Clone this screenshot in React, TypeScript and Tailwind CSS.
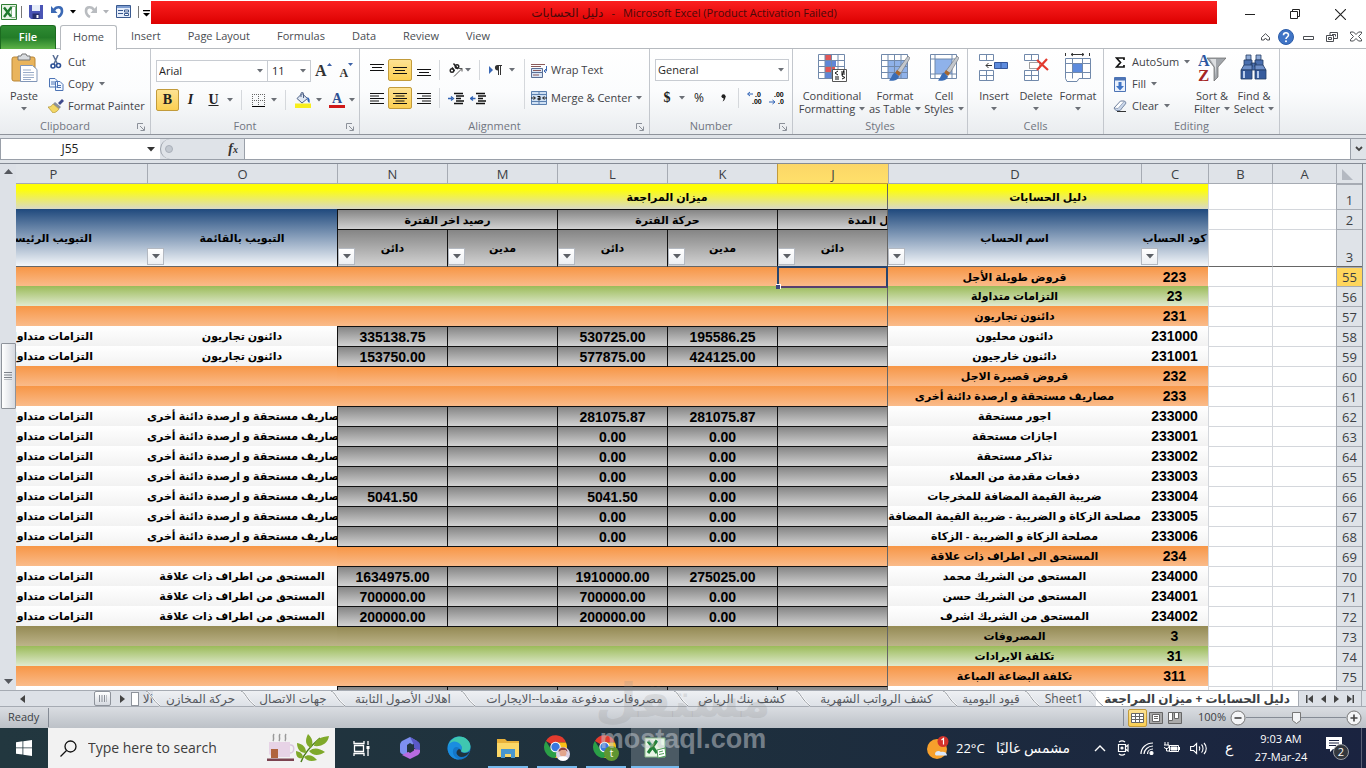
import { ReactNode } from "react";
import clsx from "clsx";

type Kind = "orange" | "green" | "khaki" | "item";

type Row = {
  n: number;
  kind: Kind;
  code: string;
  name: string;
  k?: string;
  l?: string;
  m?: string;
  nn?: string;
  o?: string;
};

const TRADE = "دائنون تجاريون";
const ACCRUED = "مصاريف مستحقة و ارصدة دائنة أخرى";
const RELATED = "المستحق من اطراف ذات علاقة";

const rows: Row[] = [
  { n: 55, kind: "orange", code: "223", name: "قروض طويلة الأجل" },
  { n: 56, kind: "green", code: "23", name: "التزامات متداولة" },
  { n: 57, kind: "orange", code: "231", name: "دائنون تجاريون" },
  { n: 58, kind: "item", code: "231000", name: "دائنون محليون", k: "195586.25", l: "530725.00", nn: "335138.75", o: TRADE },
  { n: 59, kind: "item", code: "231001", name: "دائنون خارجيون", k: "424125.00", l: "577875.00", nn: "153750.00", o: TRADE },
  { n: 60, kind: "orange", code: "232", name: "قروض قصيرة الاجل" },
  { n: 61, kind: "orange", code: "233", name: "مصاريف مستحقة و ارصدة دائنة أخرى" },
  { n: 62, kind: "item", code: "233000", name: "اجور مستحقة", k: "281075.87", l: "281075.87", o: ACCRUED },
  { n: 63, kind: "item", code: "233001", name: "اجازات مستحقة", k: "0.00", l: "0.00", o: ACCRUED },
  { n: 64, kind: "item", code: "233002", name: "تذاكر مستحقة", k: "0.00", l: "0.00", o: ACCRUED },
  { n: 65, kind: "item", code: "233003", name: "دفعات مقدمة من العملاء", k: "0.00", l: "0.00", o: ACCRUED },
  { n: 66, kind: "item", code: "233004", name: "ضريبة القيمة المضافة للمخرجات", k: "0.00", l: "5041.50", nn: "5041.50", o: ACCRUED },
  { n: 67, kind: "item", code: "233005", name: "مصلحة الزكاة و الضريبة - ضريبة القيمة المضافة", k: "0.00", l: "0.00", o: ACCRUED },
  { n: 68, kind: "item", code: "233006", name: "مصلحة الزكاة و الضريبة - الزكاة", k: "0.00", l: "0.00", o: ACCRUED },
  { n: 69, kind: "orange", code: "234", name: "المستحق الى اطراف ذات علاقة" },
  { n: 70, kind: "item", code: "234000", name: "المستحق من الشريك محمد", k: "275025.00", l: "1910000.00", nn: "1634975.00", o: RELATED },
  { n: 71, kind: "item", code: "234001", name: "المستحق من الشريك حسن", k: "0.00", l: "700000.00", nn: "700000.00", o: RELATED },
  { n: 72, kind: "item", code: "234002", name: "المستحق من الشريك اشرف", k: "0.00", l: "200000.00", nn: "200000.00", o: RELATED },
  { n: 73, kind: "khaki", code: "3", name: "المصروفات" },
  { n: 74, kind: "green", code: "31", name: "تكلفة الايرادات" },
  { n: 75, kind: "orange", code: "311", name: "تكلفة البضاعة المباعة" },
  { n: 76, kind: "item", code: "", name: "" },
];

const fills: Record<Kind, string> = {
  orange: "bg-linear-to-b/srgb from-[#f79646] to-[#fabb8a]",
  green: "bg-linear-to-b/srgb from-[#9bbb59] to-[#e0ead0]",
  khaki: "bg-linear-to-b/srgb from-[#948a54] to-[#bdb48a]",
  item: "bg-linear-to-b/srgb from-white to-[#f2f2f2]",
};

const GRAY = "bg-linear-to-b/srgb from-[#858585] to-[#d2d2d2]";
const BLUE = "bg-linear-to-b/srgb from-[#1f497d] to-[#f4f7fa]";
const YELLOW = "bg-linear-to-b/srgb from-[#ffff05] from-20% to-[#d9d9c6]";

const Arrow = ({ className = "text-[#6b6f76]" }: { className?: string }) => (
  <svg viewBox="0 0 6 4" className={clsx("w-[6px] h-1 shrink-0", className)}>
    <path d="M0 0h6L3 3.6z" fill="currentColor" />
  </svg>
);

const Sep = ({ className }: { className?: string }) => (
  <span className={clsx("w-px shrink-0", className || "h-5 bg-[#d5d8dc]")} />
);

const Launcher = () => (
  <button aria-label="More options" className="absolute right-[5px] bottom-[3px]">
    <svg viewBox="0 0 8 8" className="w-2 h-2" fill="none" stroke="#8b9099">
      <path d="M.5 6V.5H6M3 3l4 4M7.500 3.500V7.500H3.500" />
    </svg>
  </button>
);

type GroupProps = { label: string; className: string; children: ReactNode; launcher?: boolean };

const Group = ({ label, className, children, launcher }: GroupProps) => (
  <section className={clsx("relative flex flex-col shrink-0 border-r border-[#c3c7cd] h-full", className)}>
    <div className="h-[69px]">{children}</div>
    <div className="text-center text-[11px] leading-4 text-[#70757f]">{label}</div>
    {launcher && <Launcher />}
  </section>
);

const BigButton = ({ icon, lines, className }: { icon: ReactNode; lines: string[]; className: string }) => (
  <button className={clsx("flex flex-col items-center shrink-0 whitespace-nowrap text-[11px] leading-[13px]", className)}>
    <span className="h-[34px] pt-1">{icon}</span>
    <span className="pt-[6px]">{lines[0]}</span>
    <span className="h-[13px] flex items-center gap-1">
      {lines[1]}
      <Arrow />
    </span>
  </button>
);

const SmallButton = ({ icon, label, arrow }: { icon: ReactNode; label: string; arrow?: boolean }) => (
  <button className="flex items-center h-[22px] gap-1 text-[11px] whitespace-nowrap">
    <span className="w-4 flex justify-center">{icon}</span>
    {label}
    {arrow && <Arrow className="ml-px text-[#6b6f76]" />}
  </button>
);

const Lines = ({ d }: { d: string }) => (
  <svg viewBox="0 0 14 13" className="w-[14px] h-[13px]" stroke="#111" fill="none">
    <path d={d} />
  </svg>
);

const ExcelIcon = () => (
  <svg viewBox="0 0 16 16" className="w-4 h-4">
    <path d="M.5.500h15v15H.5z" fill="#e8f3e6" stroke="#2f7d32" />
    <path d="M10.500 2.500h4v11h-4z" fill="#fff" stroke="#5d9c5f" strokeWidth=".7" />
    <path d="m3 3.500 7 9M10.500 3l-7.500 10" stroke="#1f7a2e" strokeWidth="2.400" />
  </svg>
);

const GridIcon = ({ children }: { children?: ReactNode }) => (
  <svg viewBox="0 0 30 30" className="w-[30px] h-[30px]">
    <path d="M1.500 1.500h26v24h-26z" fill="#fff" stroke="#7189ab" />
    {children}
  </svg>
);

const Brush = () => (
  <>
    <path d="m28 3 2 2-9 15-4-2z" fill="#c3c7cc" stroke="#6b6f76" strokeWidth=".6" />
    <path d="m17 17 4 3-2 3-4-3z" fill="#a8672e" />
    <path d="M15 19.500c-3 1-3 5-6 8 4 1 9 0 10-4z" fill="#3a6cb5" />
  </>
);

const TitleBar = () => (
  <header className="flex h-6 shrink-0 bg-white">
    <div className="flex items-center w-[151px] shrink-0 pl-px pb-px">
      <ExcelIcon />
      <Sep className="h-3 ml-1 bg-[#777]" />
      <button aria-label="Save" className="ml-[7px]">
        <svg viewBox="0 0 14 14" className="w-[14px] h-[14px]">
          <path d="M0 0h14v14H2l-2-2z" fill="#4a55b5" />
          <path d="M3 0h8v6H3z" fill="#e6edf8" />
          <path d="M3.500 8.500h7V14h-7z" fill="#26306e" />
          <path d="M7.500 10h2v3h-2z" fill="#fff" />
        </svg>
      </button>
      <button aria-label="Undo" className="ml-2 flex items-center gap-[6px]">
        <svg viewBox="0 0 13 13" className="w-[13px] h-[13px]" fill="none">
          <path d="M3 5C5 1.500 11 1 11 6c0 3-2 5-4 6" stroke="#3b69b5" strokeWidth="2.600" />
          <path d="M0 1v7h6.500z" fill="#3b69b5" />
        </svg>
        <Arrow className="text-black" />
      </button>
      <button aria-label="Redo" className="ml-2 flex items-center gap-[6px]">
        <svg viewBox="0 0 13 13" className="w-[13px] h-[13px]" fill="none">
          <path d="M10 5C8 1.500 2 1 2 6c0 3 2 5 4 6" stroke="#b9bcc0" strokeWidth="2.600" />
          <path d="M13 1v7H6.500z" fill="#b9bcc0" />
        </svg>
        <Arrow className="text-[#b0b3b8]" />
      </button>
      <button aria-label="Form" className="ml-[7px]">
        <svg viewBox="0 0 15 13" className="w-[15px] h-[13px]">
          <path d="M.5.5h14v12H.5z" fill="#e6eefb" stroke="#39598f" />
          <path d="M1 1h13v2H1z" fill="#7d9cd0" />
          <path d="M2 5.500h5M2 8.500h5" stroke="#39598f" />
          <path d="M8.500 5h4v2h-4zM8.500 8.500h4v2h-4z" fill="#fff" stroke="#39598f" />
        </svg>
      </button>
      <Sep className="h-3 ml-[7px] bg-[#777]" />
      <button aria-label="Customize" className="ml-1 pt-1">
        <svg viewBox="0 0 7 7" className="w-[7px] h-[7px]">
          <path d="M0 0h7v1.200H0zM0 3h7L3.500 6.500z" />
        </svg>
      </button>
    </div>
    <h1 className="flex-1 mt-px bg-linear-to-b/srgb from-[#fb2020] to-[#dc0000] text-center text-[11px] leading-6 text-[#4a0a0a] font-medium">
      <span dir="rtl" className="text-xs">دليل الحسابات</span>
      <span className="mx-2">-</span>
      <span>Microsoft Excel (Product Activation Failed)</span>
    </h1>
    <div className="flex items-center w-[149px] shrink-0 pt-1 pl-7 gap-[35px] text-[#222]">
      <button aria-label="Minimize">
        <svg viewBox="0 0 10 10" className="w-[10px] h-[10px]" stroke="currentColor"><path d="M0 5.500h10" /></svg>
      </button>
      <button aria-label="Restore">
        <svg viewBox="0 0 10 10" className="w-[10px] h-[10px]" stroke="currentColor" fill="none">
          <path d="M.5 2.500h7v7h-7zM2.500 2.500v-2h7v7h-2" />
        </svg>
      </button>
      <button aria-label="Close">
        <svg viewBox="0 0 10 10" className="w-[11px] h-[11px]" stroke="currentColor"><path d="m0 0 10 10M10 0 0 10" /></svg>
      </button>
    </div>
  </header>
);

const TabBar = () => (
  <nav className="flex h-[25px] shrink-0 bg-white text-[11px] text-[#4a4d52] border-b border-[#b6babf] pt-px">
    <button className="w-14 h-6 rounded-t-[3px] border border-b-0 border-[#1c6b20] bg-linear-to-b/srgb from-[#2f8c33] via-[#237c28] to-[#5db348] text-white font-semibold">
      File
    </button>
    <button className="ml-1 w-[57px] h-[25px] pb-[2px] -mb-px rounded-t-[3px] border border-b-0 border-[#b6babf] bg-white z-10">Home</button>
    <div className="flex items-center pl-[14px] gap-[27px]">
      <button>Insert</button>
      <button>Page Layout</button>
      <button>Formulas</button>
      <button>Data</button>
      <button>Review</button>
      <button>View</button>
    </div>
    <div className="ml-auto flex items-center pr-1 gap-2 text-[#4a4d52]">
      <button aria-label="Collapse ribbon">
        <svg viewBox="0 0 9 8" className="w-[9px] h-2" fill="none" stroke="currentColor">
          <path d="M.5 4.500 4.500.7l4 3.800v2.500h-2.500L4.500 5 3 7H.5z" />
        </svg>
      </button>
      <button aria-label="Help">
        <svg viewBox="0 0 16 16" className="w-4 h-4">
          <circle cx="8" cy="8" r="7.500" fill="#3f74c6" stroke="#2d5da8" />
          <path d="M5.500 6.200c0-3.200 5-3.200 5-.2 0 2-2.500 2-2.500 4" fill="none" stroke="#fff" strokeWidth="1.600" />
          <circle cx="8" cy="12.300" r="1" fill="#fff" />
        </svg>
      </button>
      <button aria-label="Minimize workbook">
        <svg viewBox="0 0 12 12" className="w-3 h-3" fill="none" stroke="currentColor"><path d="M1.500 5.500h10v3h-10z" /></svg>
      </button>
      <button aria-label="Restore workbook" className="ml-1">
        <svg viewBox="0 0 12 12" className="w-3 h-3" fill="none" stroke="currentColor">
          <path d="M.5 4.500h7v6h-7zM2.500 6.500h3v2h-3zM4 4.500v-3h7.500v6h-4M6 3.500h3.500v2" />
        </svg>
      </button>
      <button aria-label="Close workbook" className="ml-1">
        <svg viewBox="0 0 12 11" className="w-3 h-[11px]" fill="none" stroke="currentColor">
          <path d="M.5 1h3L6 3.500 8.500 1h3v1.500L8.500 5.500l3 3V10h-3L6 7.500 3.500 10h-3V8.500l3-3-3-3z" />
        </svg>
      </button>
    </div>
  </nav>
);

const ON = "bg-linear-to-b/srgb from-[#fde293] to-[#fbcf52] border border-[#c29b3b] rounded-[2px]";

const Ribbon = () => (
  <div className="flex h-[86px] shrink-0 bg-linear-to-b/srgb from-white via-[#fbfcfd] to-[#e9ecef] border-b border-[#8e939b] text-[#3f4247]">
    <Group label="Clipboard" className="w-[151px] pr-5" launcher>
      <div className="flex">
        <BigButton
          className="w-12"
          lines={["Paste", ""]}
          icon={
            <svg viewBox="0 0 28 30" className="w-7 h-[30px]">
              <rect x="2" y="4" width="23" height="24" rx="2" fill="#e9b45c" stroke="#b98636" />
              <path d="M8 3h3l1-2h4l1 2h3v4H8z" fill="#d9dce0" stroke="#777" />
              <path d="M10.500 12.500h12l4.500 4v12H10.500z" fill="#fff" stroke="#8196b8" />
              <path d="M13 17h8M13 19.500h11M13 22h11M13 24.500h11M13 26.500h8" stroke="#9aacc8" />
            </svg>
          }
        />
        <div className="pt-[2px]">
          <SmallButton
            label="Cut"
            icon={
              <svg viewBox="0 0 12 14" className="w-3 h-[14px]" fill="none">
                <path d="M3 0 7.500 9M8 0 4 9" stroke="#5a6f95" strokeWidth="1.500" />
                <circle cx="3" cy="11" r="2" stroke="#2b4f95" strokeWidth="1.600" />
                <circle cx="8.500" cy="10.500" r="2" stroke="#2b4f95" strokeWidth="1.600" />
              </svg>
            }
          />
          <SmallButton
            label="Copy"
            arrow
            icon={
              <svg viewBox="0 0 15 13" className="w-[15px] h-[13px]" fill="#f2f7ff" stroke="#4d74b5">
                <path d="M.5.500H6L8.500 3v6h-8zM6.500 3.500H11l3 3v6H6.500z" />
                <path d="M2 4h4M2 6h4M8 7.500h4M8 9.500h4" />
              </svg>
            }
          />
          <SmallButton
            label="Format Painter"
            icon={
              <svg viewBox="0 0 16 14" className="w-4 h-[14px]">
                <path d="m10 4 4-4 2 2-4 4z" fill="#3f4a8c" />
                <path d="m7 3 6 5-2 2-6-5z" fill="#8b919b" />
                <path d="m5 5 6 5c-2 3-5 4-6 4L0 8c2 0 4-1 5-3z" fill="#f3d766" stroke="#a88a2a" strokeWidth=".6" />
              </svg>
            }
          />
        </div>
      </div>
    </Group>

    <Group label="Font" className="w-[209px] pr-5" launcher>
      <div className="w-[208px] flex items-center pl-[5px] pt-[10px]">
        <label className="flex items-center w-28 h-[22px] border border-[#c8ccd2] bg-white">
          <select aria-label="Font name" defaultValue="Arial" className="appearance-none flex-1 pl-[2px] text-[11px] text-[#1f1f1f]">
            <option>Arial</option>
          </select>
          <Arrow className="mr-1 text-[#6b6f76]" />
        </label>
        <label className="flex items-center w-[43px] h-[22px] border border-l-0 border-[#c8ccd2] bg-white">
          <select aria-label="Font size" defaultValue="11" className="appearance-none flex-1 w-5 pl-1 text-[11px] text-[#1f1f1f]">
            <option>11</option>
          </select>
          <Arrow className="mr-1 text-[#6b6f76]" />
        </label>
        <button className="ml-1 flex items-start font-['Liberation_Serif',serif] font-bold text-base leading-5 text-[#333]">
          A
          <svg viewBox="0 0 5 3" className="w-[5px] h-[3px] mt-[2px]"><path d="M0 3h5L2.500 0z" fill="#3c62a8" /></svg>
        </button>
        <button className="ml-2 flex items-start font-['Liberation_Serif',serif] font-bold text-xs leading-5 pt-1 text-[#333]">
          A
          <svg viewBox="0 0 5 3" className="w-[5px] h-[3px]"><path d="M0 0h5L2.500 3z" fill="#3c62a8" /></svg>
        </button>
      </div>
      <div className="w-[208px] flex items-center pl-[5px] pt-[6px] font-['Liberation_Serif',serif] text-sm text-[#222]">
        <button className={clsx("w-[23px] h-[22px] leading-5 font-bold", ON)}>B</button>
        <button className="w-[23px] italic font-bold">I</button>
        <button className="w-[23px] underline font-bold">U</button>
        <Arrow className="ml-[2px] text-[#6b6f76]" />
        <Sep className="h-5 bg-[#d5d8dc] ml-2" />
        <button aria-label="Borders" className="ml-[10px]">
          <svg viewBox="0 0 13 13" className="w-[13px] h-[13px]" fill="none">
            <path d="M.5 0v12M6.500 0v12M12.500 0v12M0 .500h13M0 6.500h13" stroke="#666" strokeDasharray="1 1" />
            <path d="M0 12.500h13" stroke="#000" />
          </svg>
        </button>
        <Arrow className="ml-[6px] text-[#6b6f76]" />
        <Sep className="h-5 bg-[#d5d8dc] ml-2" />
        <button aria-label="Fill color" className="ml-[9px]">
          <svg viewBox="0 0 16 16" className="w-4 h-4">
            <path d="M0 11.500h16V16H0z" fill="#f8ee1c" />
            <path d="m7 1.500 5.500 5L7 11 2 6.500z" fill="#dfe7f3" stroke="#4b5f85" />
            <path d="M6 5V1.500c0-1.500 2.500-1.500 2.500 0V6" fill="none" stroke="#4b5f85" />
            <path d="M12.500 5c2 1 2.500 3 2 6-1.500-1-2.500-2-2-6z" fill="#2f62b5" />
          </svg>
        </button>
        <Arrow className="ml-[5px] text-[#6b6f76]" />
        <button aria-label="Font color" className="ml-[7px] flex flex-col items-center w-4 leading-[13px] font-bold text-[#2c4f93]">
          A
          <span className="w-4 h-[3px] bg-[#d01818]" />
        </button>
        <Arrow className="ml-1 text-[#6b6f76]" />
      </div>
    </Group>

    <Group label="Alignment" className="w-[290px] pr-5" launcher>
      <div className="flex pl-[5px] pt-[10px]">
        <div className="w-[159px] shrink-0">
          <div className="flex items-center h-[22px]">
            <button aria-label="Top align" className="w-[23px] flex justify-center pb-1"><Lines d="M0 2.500h14M2 5.500h10M0 8.500h14" /></button>
            <button aria-label="Middle align" className={clsx("w-6 h-[22px] flex justify-center items-center", ON)}><Lines d="M0 3.500h14M2 6.500h10M0 9.500h14" /></button>
            <button aria-label="Bottom align" className="w-[23px] flex justify-center pt-1"><Lines d="M0 3.500h14M2 6.500h10M0 9.500h14" /></button>
            <Sep className="h-5 bg-[#d5d8dc] ml-1" />
            <button aria-label="Orientation" className="ml-2 flex items-center">
              <svg viewBox="0 0 16 16" className="w-4 h-4" fill="none" stroke="#222">
                <circle cx="4" cy="8.500" r="1.800" strokeWidth="1.400" />
                <path d="M4 5.500 6.500 9M5.500 1.500 10 7" strokeWidth="1.400" />
                <circle cx="9" cy="4.500" r="1.800" strokeWidth="1.400" />
                <path d="m6 14.500 8-8m0 0h-3m3 0v3" stroke="#555" />
              </svg>
              <Arrow className="ml-px text-[#6b6f76]" />
            </button>
            <Sep className="h-5 bg-[#d5d8dc] ml-2" />
            <button aria-label="Text direction" className="ml-[9px] flex items-center">
              <svg viewBox="0 0 13 10" className="w-[13px] h-[10px]">
                <path d="m0 1 4 4-4 4z" fill="#3b69b5" />
                <path d="M8.500 0H13v1h-1v9h-1V1h-1v9H9V5.500C5 5.500 5 0 8.500 0z" fill="#333" />
              </svg>
              <Arrow className="ml-[7px] text-[#6b6f76]" />
            </button>
          </div>
          <div className="flex items-center h-[22px] mt-[6px]">
            <button aria-label="Align left" className="w-[23px] flex justify-center"><Lines d="M0 1.500h14M0 4h9M0 6.500h14M0 9h9M0 11.500h14" /></button>
            <button aria-label="Center" className={clsx("w-6 h-[22px] flex justify-center items-center", ON)}><Lines d="M0 1.500h14M2.500 4h9M0 6.500h14M2.500 9h9M0 11.500h14" /></button>
            <button aria-label="Align right" className="w-[23px] flex justify-center"><Lines d="M0 1.500h14M5 4h9M0 6.500h14M5 9h9M0 11.500h14" /></button>
            <Sep className="h-5 bg-[#d5d8dc] ml-1" />
            <button aria-label="Decrease indent" className="ml-2">
              <svg viewBox="0 0 16 13" className="w-4 h-[13px]" stroke="#111" fill="none">
                <path d="M6 1.500h9M8 4h8M8 6.500h5M8 9h8M6 11.500h9" strokeWidth="1.300" />
                <path d="M0 6.500h4M3 4.500l2.500 2L3 8.500" stroke="#2f62b5" strokeWidth="1.300" />
              </svg>
            </button>
            <button aria-label="Increase indent" className="ml-[6px]">
              <svg viewBox="0 0 16 13" className="w-4 h-[13px]" stroke="#111" fill="none">
                <path d="M6 1.500h9M8 4h8M8 6.500h5M8 9h8M6 11.500h9" strokeWidth="1.300" />
                <path d="M5.500 6.500h-4M3 4.500.500 6.500 3 8.500" stroke="#2f62b5" strokeWidth="1.300" />
              </svg>
            </button>
          </div>
        </div>
        <div className="border-l border-[#d5d8dc] pl-[6px] text-[11px]">
          <button className="flex items-center h-[22px] gap-1 whitespace-nowrap">
            <svg viewBox="0 0 16 15" className="w-4 h-[15px]" fill="none">
              <path d="M0 1.500h14M0 3.500h10" stroke="#8a5a5a" />
              <path d="M.5 5.500h11v4H.5zM.5 9.500h11v5H.5z" fill="#dbe6f5" stroke="#5a6f95" />
              <path d="M2 7.500h8M2 12h6" stroke="#8a5a5a" />
              <path d="M15.500 3v5h-2M15 6l-2 2 2 2" stroke="#3b69b5" />
            </svg>
            Wrap Text
          </button>
          <button className="flex items-center h-[22px] mt-[6px] gap-1 whitespace-nowrap">
            <svg viewBox="0 0 16 14" className="w-4 h-[14px]" fill="none">
              <path d="M.5.500h15v13H.5zM.5 3.500h15M.5 10.500h15M8 0v3M8 11v3" fill="#cfe0f3" stroke="#5a7fae" />
              <path d="M0 7h4M12 7h4M2.500 5.500 4.500 7l-2 1.500M13.500 5.500l-2 1.500 2 1.500" stroke="#222" />
              <path d="M6.500 5.500h2.500V9M9 7.200H7v1.600h2" stroke="#111" />
            </svg>
            Merge &amp; Center
            <Arrow />
          </button>
        </div>
      </div>
    </Group>

    <Group label="Number" className="w-[143px] pr-5" launcher>
      <div className="w-[140px] pl-[5px] pt-[10px]">
        <label className="flex items-center h-[22px] w-[134px] border border-[#c8ccd2] bg-white">
          <select aria-label="Number format" defaultValue="General" className="appearance-none flex-1 pl-[2px] text-[11px] text-[#1f1f1f]">
            <option>General</option>
          </select>
          <Arrow className="mr-1 text-[#6b6f76]" />
        </label>
        <div className="flex items-center h-[22px] mt-[6px] text-[#222]">
          <button className="w-6 font-['Liberation_Serif',serif] font-bold text-sm">$</button>
          <Arrow className="text-[#6b6f76]" />
          <button className="w-7 text-xs font-medium">%</button>
          <button aria-label="Comma style" className="w-5 flex justify-center">
            <svg viewBox="0 0 5 8" className="w-[5px] h-2"><circle cx="2.500" cy="2.200" r="2" fill="#222" /><path d="M4.500 2c0 3-1 4.500-3 5.500 1-1.500 1.200-2.500 1-4z" fill="#222" /></svg>
          </button>
          <Sep className="h-5 bg-[#d5d8dc] ml-[5px]" />
          <button aria-label="Increase decimal" className="ml-[7px]">
            <svg viewBox="0 0 17 14" className="w-[17px] h-[14px]" fontSize="7" fontFamily="Liberation Sans" fontWeight="bold">
              <text x="9" y="6">.0</text>
              <text x="6" y="13">.00</text>
              <path d="M7 3H2m2-2L1.500 3 4 5" stroke="#2f62b5" fill="none" />
            </svg>
          </button>
          <button aria-label="Decrease decimal" className="ml-[6px]">
            <svg viewBox="0 0 17 14" className="w-[17px] h-[14px]" fontSize="7" fontFamily="Liberation Sans" fontWeight="bold">
              <text x="5" y="6">.00</text>
              <text x="9" y="13">.0</text>
              <path d="M0 11h5M3.500 9 6 11l-2.500 2" stroke="#2f62b5" fill="none" />
            </svg>
          </button>
        </div>
      </div>
    </Group>

    <Group label="Styles" className="w-[175px]">
      <div className="flex pl-[7px]">
        <BigButton
          className="w-16"
          lines={["Conditional", "Formatting"]}
          icon={
            <GridIcon>
              <path d="M8 2h6v6H8zM8 14h10v6H8z" fill="#e05656" />
              <path d="M8 8h11v6H8zM8 20h6v5H8z" fill="#5f86d8" />
              <path d="M8 1.500v24M14.500 1.500v24M21 1.500v24M1.500 7.500h26M1.500 13.500h26M1.500 19.500h26" stroke="#7189ab" fill="none" />
              <path d="M15.500 16.500h14v12h-14z" fill="#fff" stroke="#555" />
              <path d="m21 18-3 2 3 2M18 24h4M18 26h4M24 19h4M24 21h4M27 17l-2 6M25 23l3 1.500-3 1.500" stroke="#111" fill="none" />
            </GridIcon>
          }
        />
        <BigButton
          className="w-[62px]"
          lines={["Format", "as Table"]}
          icon={
            <GridIcon>
              <path d="M8 8h19v17H8z" fill="#8fb2ea" />
              <path d="M8 1.500v24M14.500 1.500v24M21 1.500v24M1.500 7.500h26M1.500 13.500h26M1.500 19.500h26" stroke="#7189ab" fill="none" />
              <Brush />
            </GridIcon>
          }
        />
        <BigButton
          className="w-9"
          lines={["Cell", "Styles"]}
          icon={
            <GridIcon>
              <path d="M6 6h17v15H6z" fill="#8fb2ea" />
              <path d="M6 1.500v24M23 1.500v24M1.500 6h26M1.500 21h26" stroke="#7189ab" fill="none" />
              <Brush />
            </GridIcon>
          }
        />
      </div>
    </Group>

    <Group label="Cells" className="w-[136px]">
      <div className="flex pl-[5px]">
        <BigButton
          className="w-[42px]"
          lines={["Insert", ""]}
          icon={
            <svg viewBox="0 0 30 30" className="w-[30px] h-[30px]" fill="#fff" stroke="#7189ab">
              <path d="M.5 1.500h14v6H.5zM7.500 1.500v6M.5 17.500h14v10H.5zM7.500 17.500v10M.5 22.500h14" />
              <path d="M15.500 9.500h13v6h-13zM22 9.500v6" fill="#5d8bdd" stroke="#34569a" />
              <path d="M13 12.500H7m2.500-2.500L7 12.500 9.500 15" stroke="#333" fill="none" />
            </svg>
          }
        />
        <BigButton
          className="w-[42px]"
          lines={["Delete", ""]}
          icon={
            <svg viewBox="0 0 30 30" className="w-[30px] h-[30px]" fill="#fff" stroke="#7189ab">
              <path d="M3.500 1.500h14v6h-14zM10.500 1.500v6M3.500 17.500h14v10h-14zM10.500 17.500v10M3.500 22.500h14" />
              <path d="M8.500 9.500h10v6h-10z" strokeDasharray="1 1" stroke="#444" />
              <path d="m16 7 11 10M26 6 16 17" stroke="#e23a2e" strokeWidth="2.200" />
            </svg>
          }
        />
        <BigButton
          className="w-[42px]"
          lines={["Format", ""]}
          icon={
            <svg viewBox="0 0 30 30" className="w-[30px] h-[30px]" fill="#fff" stroke="#7189ab">
              <path d="M2.500 5.500h25v20H16l-2 3H4l-1.500-3z" />
              <path d="M10 10.500h9v9h-9z" fill="#5d8bdd" stroke="none" />
              <path d="M9.500 5.500v20M19.500 5.500v20M2.500 10.500h25M2.500 19.500h25" fill="none" />
              <path d="M2.500 0v3M26.500 0v3" stroke="#333" />
              <path d="M8 1.500h13M10 0 8 1.500 10 3M19 0l2 1.500L19 3" stroke="#333" fill="none" />
            </svg>
          }
        />
      </div>
    </Group>

    <Group label="Editing" className="w-44">
      <div className="flex pl-2">
        <div className="w-[79px] pt-[2px] shrink-0">
          <SmallButton
            label="AutoSum"
            arrow
            icon={
              <svg viewBox="0 0 10 11" className="w-[10px] h-[11px]" fill="none" stroke="#111" strokeWidth="1.700">
                <path d="M9 3V1H1.500L5.500 5.500l-4 4.500H9V8" />
              </svg>
            }
          />
          <SmallButton
            label="Fill"
            arrow
            icon={
              <svg viewBox="0 0 12 15" className="w-3 h-[15px]">
                <path d="M.5.500h11v14H.5z" fill="#eaf1fc" stroke="#4d74b5" />
                <path d="M1 1h10v2.500H1z" fill="#4d74b5" />
                <path d="M4.500 5h3v4H10l-4 4.500L2 9h2.500z" fill="#3f74c6" />
              </svg>
            }
          />
          <SmallButton
            label="Clear"
            arrow
            icon={
              <svg viewBox="0 0 14 12" className="w-[14px] h-3">
                <path d="m1 8 6.500-7h4l1.500 2-6 7.500H3z" fill="#fff" stroke="#6f7f9c" />
                <path d="m1 8 4 .5L11.500 1 13 3l-6 7.500H3z" fill="#c9d6ea" stroke="#6f7f9c" strokeWidth=".6" />
                <path d="M4 11.500h9" stroke="#333" />
              </svg>
            }
          />
        </div>
        <BigButton
          className="w-[42px]"
          lines={["Sort &", "Filter"]}
          icon={
            <svg viewBox="0 0 28 30" className="w-7 h-[30px]" fontFamily="Liberation Serif" fontWeight="bold">
              <text x="0" y="13" fontSize="16" fill="#2c57a0">A</text>
              <text x="0" y="28" fontSize="17" fill="#a52525">Z</text>
              <path d="M9 5h19l-8 9v10l-4 4V14z" fill="#a2a6ab" stroke="#666" strokeWidth=".7" />
              <path d="M12 6h6v8l-1 10v-10z" fill="#dcdee0" />
            </svg>
          }
        />
        <BigButton
          className="w-[42px]"
          lines={["Find &", "Select"]}
          icon={
            <svg viewBox="0 0 28 28" className="w-7 h-7" stroke="#243c66" strokeWidth=".8">
              <path d="M6 2h5v5H6zM16 2h5v5h-5z" fill="#8faad6" />
              <path d="M4 7h8v7H4zM15 7h8v7h-8zM11 10h5v7h-5z" fill="#4a6fae" />
              <path d="M1 17l3-5h8v5zM15 17v-5h8l3 5z" fill="#6f90c8" />
              <path d="M1 17h11v9H1zM15 17h11v9H15z" fill="#365b9c" />
              <path d="M4 18v7M18 18v7" stroke="#b8cbea" strokeWidth="2" />
            </svg>
          }
        />
      </div>
    </Group>
  </div>
);

const FormulaBar = () => (
  <div className="shrink-0 bg-[#dfe3e8] pt-[3px] pb-[3px] border-b border-[#858b95]">
    <div className="flex h-[22px] border-y border-[#9aa0a9] bg-[#dfe3e8]">
      <div className="flex items-center w-40 bg-white border-l border-[#9aa0a9]">
        <input aria-label="Name box" defaultValue="J55" className="w-[138px] text-center text-xs text-[#222]" />
        <svg viewBox="0 0 8 5" className="w-2 h-[5px] ml-2"><path d="M0 0h8L4 4.500z" fill="#333" /></svg>
      </div>
      <div className="flex items-center justify-between w-[85px] rounded-l-full border-l border-r border-[#9aa0a9] pl-1 pr-[6px]">
        <span className="w-2 h-2 rounded-full bg-[#c2c8d0] border border-[#aab0b9]" />
        <span className="font-['Liberation_Serif',serif] italic font-bold text-sm leading-5 text-[#333]">
          f<span className="text-[10px]">x</span>
        </span>
      </div>
      <input aria-label="Formula" className="flex-1 min-w-0 bg-white" />
      <button aria-label="Expand formula bar" className="w-4 border-l border-[#9aa0a9] flex items-center justify-center">
        <svg viewBox="0 0 8 6" className="w-2 h-[6px]" fill="none" stroke="#444" strokeWidth="1.800"><path d="m1 1 3 3 3-3" /></svg>
      </button>
    </div>
  </div>
);

const Filter = () => (
  <button aria-label="Filter" className="absolute left-0 bottom-px w-[17px] h-[17px] bg-linear-to-b/srgb from-white to-[#eceff3] border border-[#b4b9c1] flex items-center justify-center">
    <svg viewBox="0 0 8 5" className="w-2 h-[5px]"><path d="M0 0h8L4 4.500z" fill="#5c6066" /></svg>
  </button>
);

const LINE = "border-[#111]";
const rowHead =
  "border-t border-l border-[#a6abb3] text-[#3c3f44] text-[13px] leading-[18px] font-normal align-bottom text-center font-['Open_Sans',sans-serif]";
const blank = "bg-white border-t border-l border-[#d4d7dc]";

const Sheet = () => (
  <table className="w-full table-fixed border-separate border-spacing-0 text-center text-[11px] leading-4 whitespace-nowrap text-black">
    <colgroup>
      <col />
      <col className="w-[190px]" />
      <col className="w-[110px]" />
      <col className="w-[110px]" />
      <col className="w-[110px]" />
      <col className="w-[110px]" />
      <col className="w-[111px]" />
      <col className="w-[253px]" />
      <col className="w-[67px]" />
      <col className="w-16" />
      <col className="w-16" />
      <col className="w-[26px]" />
    </colgroup>
    <thead>
      <tr className="h-5">
        {["P", "O", "N", "M", "L", "K", "J", "D", "C", "B", "A"].map((c) => (
          <th
            key={c}
            className={clsx(
              "p-0 font-normal text-[13px] text-[#3c3f44] border-b font-['Open_Sans',sans-serif]",
              c === "P" && "pr-[56px]",
              c !== "P" && "border-l",
              c === "J" ? "bg-linear-to-b/srgb from-[#fbd667] to-[#ffe06a] border-[#c29b3b]" : "bg-[#dfe3e8] border-[#a6abb3]"
            )}
          >
            {c}
          </th>
        ))}
        <th className="p-0 bg-[#dfe3e8] border-l border-b border-[#a6abb3]">
          <svg viewBox="0 0 12 12" className="w-3 h-3 ml-1"><path d="M1 1v11h11z" fill="#b4b9c1" /></svg>
        </th>
      </tr>
      <tr className="h-[25px] font-bold">
        <td colSpan={3} className={YELLOW} />
        <td colSpan={4} className={clsx("p-0 border-r border-[#666]", YELLOW)}>ميزان المراجعة</td>
        <td colSpan={2} className={clsx("p-0", YELLOW)}>دليل الحسابات</td>
        <td className="bg-white border-l border-[#d4d7dc]" />
        <td className="bg-white border-l border-[#d4d7dc]" />
        <th className={clsx("p-0 bg-[#dfe3e8]", rowHead)}>1</th>
      </tr>
      <tr className="h-5 font-bold">
        <td rowSpan={2} dir="rtl" className={clsx("p-0 pr-[55px] text-right overflow-hidden border-b border-[#666]", BLUE)}>التبويب الرئيسي</td>
        <td rowSpan={2} className={clsx("p-0 relative border-b border-[#666]", BLUE)}>
          التبويب بالقائمة
          <Filter />
        </td>
        <td colSpan={2} className={clsx("p-0 border-t border-l", LINE, GRAY)}>رصيد اخر الفترة</td>
        <td colSpan={2} className={clsx("p-0 border-t border-l", LINE, GRAY)}>حركة الفترة</td>
        <td className={clsx("p-0 pl-[70px] text-left overflow-hidden border-t border-l border-r border-r-[#666]", LINE, GRAY)}>
          ول المدة
        </td>
        <td rowSpan={2} className={clsx("p-0 relative border-b border-[#666]", BLUE)}>
          اسم الحساب
          <Filter />
        </td>
        <td rowSpan={2} className={clsx("p-0 relative border-b border-[#666]", BLUE)}>
          كود الحساب
          <Filter />
        </td>
        <td className={blank} />
        <td className={blank} />
        <th className={clsx("p-0 bg-[#dfe3e8]", rowHead)}>2</th>
      </tr>
      <tr className="h-[38px] font-bold">
        {["دائن", "مدين", "دائن", "مدين", "دائن"].map((t, i) => (
          <td
            key={i}
            className={clsx("p-0 relative border-t border-l border-b border-b-[#666]", LINE, GRAY, i === 4 && "border-r border-r-[#666]")}
          >
            {t}
            <Filter />
          </td>
        ))}
        <td className={clsx("border-b border-b-[#666]", blank)} />
        <td className={clsx("border-b border-b-[#666]", blank)} />
        <th className={clsx("p-0 bg-[#dfe3e8] border-b border-b-[#666]", rowHead)}>3</th>
      </tr>
    </thead>
    <tbody className="font-bold">
      {rows.map((r, i) => {
        const fill = fills[r.kind];
        const item = r.kind === "item";
        const lined = item || (i > 0 && rows[i - 1].kind === "item");
        const cell = clsx("p-0", item ? clsx("border-l", GRAY) : fill, lined && "border-t", LINE);
        const first = r.n === 55;
        return (
          <tr key={r.n} className={first ? "h-[19px]" : "h-5"}>
            <td dir="rtl" className={clsx("p-0 pr-[54px] text-right overflow-hidden", fill)}>{r.o && "التزامات متداولة"}</td>
            <td className={clsx("p-0 overflow-hidden", fill)}>{r.o}</td>
            <td className={clsx(cell, "text-sm leading-4")}>{r.nn}</td>
            <td className={clsx(cell, "text-sm leading-4")}>{r.m}</td>
            <td className={clsx(cell, "text-sm leading-4")}>{r.l}</td>
            <td className={clsx(cell, "text-sm leading-4")}>{r.k}</td>
            <td className={clsx(cell, "relative border-r border-r-[#666]")}>
              {first && (
                <div className="absolute left-0 -top-px -right-px -bottom-[2px] z-10 border-2 border-[#26456f] border-b-[#57406f]">
                  <span className="absolute -left-[3px] -bottom-[3px] w-[5px] h-[5px] bg-[#3f4a80] border-t border-r border-white" />
                </div>
              )}
            </td>
            <td className={clsx("p-0", fill)}>{r.name}</td>
            <td className={clsx("p-0 text-sm leading-4", fill)}>{r.code}</td>
            <td className={first ? "bg-white" : blank} />
            <td className={first ? "bg-white border-l border-[#d4d7dc]" : blank} />
            <th className={clsx("p-0", rowHead, first ? "bg-[#ffd65c]" : "bg-[#dfe3e8]")}>{r.n < 76 && r.n}</th>
          </tr>
        );
      })}
    </tbody>
  </table>
);

const VScroll = () => (
  <div className="w-4 shrink-0 bg-[#dde1e7] flex flex-col items-center pt-[5px] pb-[6px]">
    <svg viewBox="0 0 9 5" className="w-[9px] h-[5px]"><path d="M0 5h9L4.500 0z" fill="#55585e" /></svg>
    <div className="mt-[169px] w-[15px] h-[66px] border border-[#8e939b] rounded-[1px] bg-linear-to-r/srgb from-white to-[#d5d9e0] flex items-center justify-center">
      <svg viewBox="0 0 8 8" className="w-2 h-2" stroke="#7d828a"><path d="M0 .500h8M0 3h8M0 5.500h8M0 8h8" /></svg>
    </div>
    <svg viewBox="0 0 9 5" className="w-[9px] h-[5px] mt-auto"><path d="M0 0h9L4.500 5z" fill="#55585e" /></svg>
  </div>
);

const sheets = [
  { name: "Sheet1", w: "w-16" },
  { name: "قيود اليومية", w: "w-[82px]" },
  { name: "كشف الرواتب الشهرية", w: "w-[147px]" },
  { name: "كشف بنك الرياض", w: "w-[122px]" },
  { name: "مصروفات مدفوعة مقدما--الايجارات", w: "w-[213px]" },
  { name: "اهلاك الأصول الثابتة", w: "w-[130px]" },
  { name: "جهات الاتصال", w: "w-[90px]" },
  { name: "حركة المخازن", w: "w-[95px]" },
];

const Slash = () => (
  <svg viewBox="0 0 14 16" className="absolute -left-[7px] top-0 z-10 w-[14px] h-4" fill="none">
    <path d="M0 0c4 1 6 9 14 15" stroke="#fff" strokeWidth="2" />
    <path d="M0 0c4 1 6 9 14 15" stroke="#8e939b" />
  </svg>
);

const SheetTabs = () => (
  <div dir="rtl" className="flex h-[17px] shrink-0 bg-[#dde1e7] border-y border-[#a6abb3] text-xs leading-[15px] text-[#55585e] pr-1 whitespace-nowrap">
    <div dir="ltr" className="w-16 flex items-center justify-between px-[7px] border-x border-[#a6abb3]">
      <button aria-label="First sheet"><svg viewBox="0 0 7 8" className="w-[7px] h-2"><path d="M0 0h1.500v8H0zM7 0v8L2 4z" fill="#444" /></svg></button>
      <button aria-label="Previous sheet"><svg viewBox="0 0 5 8" className="w-[5px] h-2"><path d="M5 0v8L0 4z" fill="#444" /></svg></button>
      <button aria-label="Next sheet"><svg viewBox="0 0 5 8" className="w-[5px] h-2"><path d="M0 0v8l5-4z" fill="#444" /></svg></button>
      <button aria-label="Last sheet"><svg viewBox="0 0 7 8" className="w-[7px] h-2"><path d="M7 0H5.500v8H7zM0 0v8l5-4z" fill="#444" /></svg></button>
    </div>
    <button className="relative w-[202px] bg-white font-bold text-[#3c3f44]">
      دليل الحسابات + ميزان المراجعة
      <Slash />
    </button>
    {sheets.map((s) => (
      <button key={s.name} className={clsx("relative shrink-0 bg-linear-to-b/srgb from-[#eef0f3] to-[#dde1e7]", s.w)}>
        {s.name}
        <Slash />
      </button>
    ))}
    <span className="w-[14px] overflow-hidden">الا</span>
    <div dir="ltr" className="flex-1 flex items-center pl-5 min-w-0">
      <svg viewBox="0 0 5 8" className="w-[5px] h-2"><path d="M5 0v8L0 4z" fill="#444" /></svg>
      <div className="ml-auto w-[17px] h-[15px] border border-[#8e939b] rounded-[2px] bg-linear-to-b/srgb from-white to-[#d5d9e0] flex items-center justify-center">
        <svg viewBox="0 0 8 7" className="w-2 h-[7px]" stroke="#8a8f97"><path d="M.5 0v7M3 0v7M5.500 0v7M8 0v7" /></svg>
      </div>
      <svg viewBox="0 0 5 8" className="w-[5px] h-2 ml-[9px] mr-[6px]"><path d="M0 0v8l5-4z" fill="#444" /></svg>
      <span className="w-2 h-[14px] border border-[#8e939b] bg-white" />
    </div>
  </div>
);

const StatusBar = () => (
  <footer className="flex items-center h-[21px] shrink-0 bg-linear-to-b/srgb from-[#dadde2] to-[#bcc1c7] text-[11px] text-[#3c3f44]">
    <span className="w-12 pl-2">Ready</span>
    <Sep className="h-[19px] bg-[#858b95]" />
    <Sep className="ml-auto h-[17px] bg-[#858b95]" />
    <button aria-label="Normal view" className={clsx("ml-1 w-[19px] h-[18px] flex items-center justify-center", ON)}>
      <svg viewBox="0 0 13 10" className="w-[13px] h-[10px]" fill="#fff" stroke="#666"><path d="M.5.500h12v9H.5zM4.500 0v10M8.500 0v10M0 3.500h13M0 6.500h13" /></svg>
    </button>
    <button aria-label="Page layout view" className="ml-[2px]">
      <svg viewBox="0 0 14 12" className="w-[14px] h-3" fill="#aaa" stroke="#666"><path d="M.5.500h13v11H.5z" /><path d="M3.500 2.500h7v7h-7zM5 4.500h4M5 6.500h4" fill="#fff" /></svg>
    </button>
    <button aria-label="Page break view" className="ml-[5px]">
      <svg viewBox="0 0 14 12" className="w-[14px] h-3" fill="#fff" stroke="#666"><path d="M.5.500h13v11H.5z" fill="#aaa" /><path d="M.5.500h4v8h-4zM6.500.500h4v6h-4z" /></svg>
    </button>
    <span className="ml-3 w-8 text-right">100%</span>
    <button aria-label="Zoom out" className="ml-1">
      <svg viewBox="0 0 16 16" className="w-4 h-4"><circle cx="8" cy="8" r="7" fill="#f4f5f7" stroke="#777" /><path d="M4.500 8h7" stroke="#444" strokeWidth="1.600" /></svg>
    </button>
    <div className="w-[100px] h-3 flex items-center justify-center relative">
      <span className="absolute left-0 right-0 h-px bg-[#858b95]" />
      <svg viewBox="0 0 9 12" className="w-[9px] h-3 relative"><path d="M.5.500h8v8l-4 3-4-3z" fill="#f4f5f7" stroke="#777" /></svg>
    </div>
    <button aria-label="Zoom in" className="mr-1">
      <svg viewBox="0 0 16 16" className="w-4 h-4"><circle cx="8" cy="8" r="7" fill="#f4f5f7" stroke="#777" /><path d="M4.500 8h7M8 4.500v7" stroke="#444" strokeWidth="1.600" /></svg>
    </button>
  </footer>
);

const TaskApp = ({ label, children, open, active }: { label: string; children: ReactNode; open?: boolean; active?: boolean }) => (
  <button aria-label={label} className={clsx("relative w-12 mr-px h-full flex items-center justify-center", active && "bg-[#4b5a64]")}>
    {children}
    {open && <span className={clsx("absolute bottom-0 h-[2px] bg-[#76b9ed]", active ? "left-0 right-0" : "left-1 right-1")} />}
  </button>
);

const Chrome = ({ children }: { children: ReactNode }) => (
  <svg viewBox="0 0 26 26" className="w-[26px] h-[26px]">
    <path d="M11.500 11.500 1.900 6A11 11 0 0 1 22 7.500h-10z" fill="#e33b2e" />
    <path d="M22 7.500A11 11 0 0 1 11 23l5-9-4-6.500z" fill="#fbc116" />
    <path d="M1.900 6A11 11 0 0 0 11 23l4.500-8h-8z" fill="#2b9f47" />
    <circle cx="11.500" cy="12" r="5.200" fill="#fff" />
    <circle cx="11.500" cy="12" r="4.200" fill="#3878e0" />
    {children}
  </svg>
);

const Taskbar = () => (
  <div className="flex h-10 shrink-0 bg-linear-to-r/srgb from-[#22373f] via-[#1e303d] to-[#1a2340] text-white">
    <button aria-label="Start" className="w-12 flex items-center justify-center">
      <svg viewBox="0 0 16 16" className="w-4 h-4" fill="#fff"><path d="M0 2.200 6.500 1.300v6.200H0zM7.300 1.200 16 0v7.500H7.300zM0 8.300h6.500v6.300L0 13.700zM7.300 8.300H16V16l-8.700-1.200z" /></svg>
    </button>
    <label className="flex items-center w-[287px] bg-[#f2f2f2] pl-3">
      <svg viewBox="0 0 17 17" className="w-[17px] h-[17px]" fill="none" stroke="#111" strokeWidth="1.300"><circle cx="10.500" cy="6.500" r="5.500" /><path d="M6.500 10.500.500 16.500" /></svg>
      <input aria-label="Search" placeholder="Type here to search" className="ml-[11px] w-[178px] text-sm placeholder:text-[#3d3d3d]" />
      <svg viewBox="0 0 64 32" className="w-16 h-8">
        <path d="M8 2c-2 3 1 4-1 7M14 2c-2 3 1 4-1 7M20 2c-2 3 1 4-1 7" stroke="#999" fill="none" strokeWidth="1.500" />
        <path d="M3 10h21v15H6l-3-3z" fill="#e7d3e6" />
        <path d="M24 13c5-1 5 8 0 8" stroke="#d9c6de" strokeWidth="1.500" fill="none" />
        <path d="M5 17h7v9H5z" fill="#b0643e" />
        <path d="M1 26.500h27v2.500H1z" fill="#7b4350" />
        <path d="M35 30c3-9 12-18 19-24" stroke="#4d7d1b" strokeWidth="1.500" fill="none" />
        <path d="M45 16c-6-3-6-8-3-14 4 4 6 8 3 14zM48 14c1-7 7-9 15-10-1 7-7 11-15 10zM40 21c-6 0-9-4-9-10 6 1 9 4 9 10zM43 19c5-4 10-3 16 1-6 4-12 4-16-1zM38 25c4-3 9-2 13 3-6 2-10 1-13-3zM37 26c-5 1-7-1-7-7 5 1 7 3 7 7z" fill="#7fa92a" />
      </svg>
    </label>
    <div className="flex pl-[2px]">
      <TaskApp label="Task view">
        <svg viewBox="0 0 17 17" className="w-[17px] h-[17px]" fill="none" stroke="#fff" strokeWidth="1.300"><path d="M1 1v2.500h10V1M1.500 5.500h9v6h-9zM1 16v-2.500h10V16M15 1v4M15 9v7" /><path d="M13.500 6h3v3h-3z" fill="#fff" stroke="none" /></svg>
      </TaskApp>
      <TaskApp label="Microsoft 365">
        <svg viewBox="0 0 22 22" className="w-[22px] h-[22px]">
          <path d="m11 0 7 4-5 4-5 3v7l3 3-8-4c-2-1-2-2-2-4V8c0-2 1-3 2-4z" fill="#7e8ff0" />
          <path d="m11 0 7 4c2 1 3 2 3 4v7l-6-4V8z" fill="#5a58c8" />
          <path d="M21 13v2c0 1-1 2-2 3l-8 4-8-4 12-6z" fill="#b86be0" />
          <path d="m8 8 3-2 4 2.500v5L11 16l-3-2z" fill="#22343f" />
        </svg>
      </TaskApp>
      <TaskApp label="Edge">
        <svg viewBox="0 0 24 24" className="w-6 h-6">
          <circle cx="12" cy="12" r="11.500" fill="#1476c8" />
          <path d="M1 11C2 4 8 .5 12 .5c7 0 11.500 5 11.500 10 0 4-3 6-6 6-2.500 0-4-1-3-3 1-3-1-5.500-4.500-5.500C5 8 1 10 1 11z" fill="#3fc7b0" />
          <path d="M1 10C4 4 10 5 13 8c2 2 2 4 1 6-3-5-9-4-8 3 1 4 4 6 7 6.500C6 24-1 18 1 10z" fill="#1a8de0" />
          <path d="M14 14c-1 2 1 3 4 3 2 0 4-1 5-2-2 4-5 6-9 6-5-1-6-6-2-8z" fill="#20333e" />
        </svg>
      </TaskApp>
      <TaskApp label="File Explorer" open>
        <svg viewBox="0 0 22 19" className="w-[22px] h-[19px]"><path d="M0 0h8l2 2h12v16H0z" fill="#e8b13a" /><path d="M0 4h22v14H0z" fill="#fbd767" /><path d="M4 10h14v9h-4v-4H8v4H4z" fill="#4896cf" /></svg>
      </TaskApp>
      <TaskApp label="Chrome" open>
        <Chrome>
          <circle cx="19" cy="19" r="7" fill="#d9d0e4" />
          <circle cx="19" cy="18" r="3.500" fill="#e2a58c" />
          <path d="M14.500 17c0-6 9-6 9 0l-2-2h-4z" fill="#8d3f3f" />
          <path d="M14 23.500c1-3 9-3 10 0-2 3-8 3-10 0z" fill="#fff" />
        </Chrome>
      </TaskApp>
      <TaskApp label="Chrome profile t" open>
        <Chrome>
          <circle cx="18.500" cy="18.500" r="7.500" fill="#5f9632" />
          <text x="18.500" y="22" fontSize="10" textAnchor="middle" fill="#fff">t</text>
        </Chrome>
      </TaskApp>
      <TaskApp label="Excel" open active>
        <svg viewBox="0 0 22 22" className="w-[22px] h-[22px]">
          <path d="M1 1h20v19H1z" fill="#e9f5e6" stroke="#87b987" />
          <path d="m4 4 9 12M13 3.500 4 16" stroke="#23803a" strokeWidth="3" />
          <path d="m13 13 8-2 1 8-8 2z" fill="#fff" stroke="#4f9b58" />
          <path d="m15 15 4-1M15 17.500l5-1" stroke="#4f9b58" />
        </svg>
      </TaskApp>
    </div>
    <div className="ml-auto flex items-center text-sm">
      <svg viewBox="0 0 24 24" className="w-6 h-6">
        <circle cx="11" cy="13" r="10" fill="#f7a02c" />
        <path d="M9 18c0-3 4-4 6-2 3-1 6 1 6 3.500H11c-1 0-2-.5-2-1.500z" fill="#dbe8fa" />
        <circle cx="17" cy="5.500" r="5.500" fill="#d3322b" />
        <path d="m15.500 4 2-1.500v6" stroke="#fff" fill="none" strokeWidth="1.200" />
      </svg>
      <span className="ml-[6px] w-[34px] text-[13px]">22°C</span>
      <span dir="rtl" className="w-20 text-sm">مشمس غالبًا</span>
      <div className="flex items-center gap-[10px] ml-6">
        <svg viewBox="0 0 12 8" className="w-3 h-2" fill="none" stroke="#fff" strokeWidth="1.400"><path d="m1 7 5-5 5 5" /></svg>
        <svg viewBox="0 0 14 16" className="w-[14px] h-4" fill="none" stroke="#fff" strokeWidth="1.200"><path d="M2.500 4.500h7v7h-7zM9.500 7l2.500-2v6l-2.500-2M3 2c2-1.500 4-1.500 6 0M3 14c2 1.500 4 1.500 6 0" /><circle cx="6" cy="8" r="1" fill="#fff" /></svg>
        <svg viewBox="0 0 14 13" className="w-[14px] h-[13px]" fill="none" stroke="#fff" strokeWidth="1.200"><path d="M1 12C1 6 6 1 13 1M4 12c0-4 4-8 9-8M7.500 12c0-3 2.500-5 5.500-5" /><circle cx="11.500" cy="11" r="1.500" fill="#fff" /></svg>
        <svg viewBox="0 0 16 12" className="w-4 h-3" fill="none" stroke="#fff"><path d="M5.500 3.500h9v6h-9zM15.500 5v3M1 0v3M4 0v3M0 3h5v2c0 2-5 2-5 0M2.500 6v3h3" /><path d="M7 5h6v3H7z" fill="#fff" /></svg>
        <svg viewBox="0 0 17 13" className="w-[17px] h-[13px]" fill="none" stroke="#fff" strokeWidth="1.100"><path d="M.6 4.500h3l3-3v10l-3-3h-3zM9 4.500c1 1 1 3 0 4M11.500 2.500c2 2 2 6 0 8M14 1c3 3 3 8 0 11" /></svg>
      </div>
      <span className="ml-[18px] w-4">ع</span>
      <div className="w-20 text-center text-[11px] leading-[18px]">
        <div>9:03 AM</div>
        <div>27-Mar-24</div>
      </div>
      <button aria-label="Notifications" className="ml-1 mr-[10px]">
        <svg viewBox="0 0 26 26" className="w-[26px] h-[26px]">
          <path d="M1 2h16v12H8l-3 3v-3H1z" fill="#fff" />
          <path d="M4 5.500h10M4 8h10M4 10.500h7" stroke="#1a2340" />
          <circle cx="16" cy="17" r="7.500" fill="#33373d" stroke="#9a9da3" />
          <text x="16" y="21" fontSize="11" textAnchor="middle" fill="#fff">2</text>
        </svg>
      </button>
      <span className="w-px h-10 bg-[#5a6075] mr-1" />
    </div>
  </div>
);

export default function App() {
  return (
    <div className="relative h-screen flex flex-col overflow-hidden font-['Open_Sans','DejaVu_Sans',sans-serif] bg-white">
      <TitleBar />
      <TabBar />
      <Ribbon />
      <FormulaBar />
      <main className="flex flex-1 min-h-0 overflow-hidden bg-[#dfe3e8] pr-[3px]">
        <VScroll />
        <div className="flex-1 min-w-0 overflow-hidden border-r border-[#858b95] font-['Liberation_Sans','DejaVu_Sans',sans-serif]">
          <Sheet />
        </div>
      </main>
      <SheetTabs />
      <StatusBar />
      <Taskbar />
      <div className="absolute inset-x-0 bottom-[13px] flex flex-col items-center pointer-events-none font-['Liberation_Sans','DejaVu_Sans',sans-serif] font-bold">
        <span className="text-5xl leading-[44px] text-[#888]/20">مستقل</span>
        <span className="text-[27px] leading-8 text-[#c8ccd2]/50">mostaql.com</span>
      </div>
    </div>
  );
}
